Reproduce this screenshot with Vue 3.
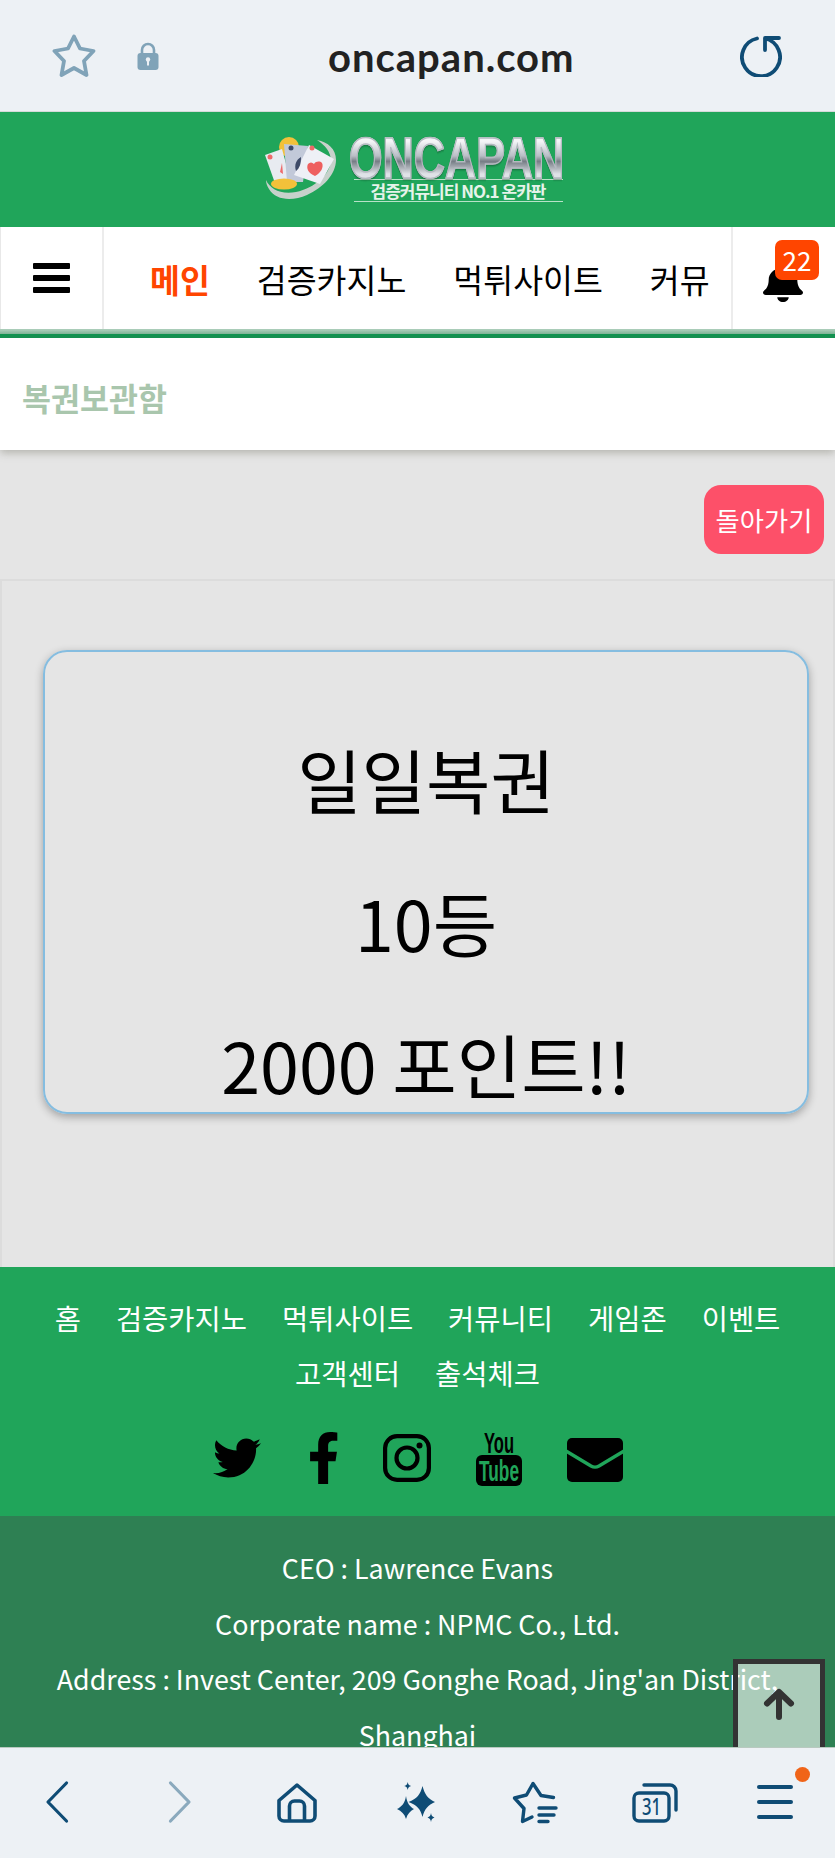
<template>
  <div class="app">
    <div class="topbar">
      <svg class="ic-star" viewBox="0 0 44 44" fill="none"><path d="M22 2.500L28 14.500 41.500 17 32 27 34.500 41 22 34 9.500 41 12 27 2.500 17 16 14.500z" stroke="#80a3b8" stroke-width="3.800" stroke-linejoin="round"/></svg>
      <svg class="ic-lock" viewBox="0 0 22 28" fill="none"><path d="M5 12V8a6 6 0 0 1 12 0v4" stroke="#80a3b8" stroke-width="2.600"/><rect x="0.500" y="11" width="21" height="17" rx="3" fill="#80a3b8"/><circle cx="11" cy="17.500" r="2.200" fill="#edf1f5"/><rect x="10" y="18" width="2" height="5.500" fill="#edf1f5"/></svg>
      <span class="url">oncapan.com</span>
      <svg class="ic-reload" viewBox="0 0 42 42" fill="none"><path d="M17 3.500A19 19 0 1 0 25 3.500M25 15V3h14" stroke="#0f4c75" stroke-width="3.800" stroke-linecap="round" stroke-linejoin="round"/></svg>
    </div>

    <div class="viewport">
      <header class="logo-bar">
        <div class="logo">
          <svg class="emblem" viewBox="0 0 72 64">
            <circle cx="24" cy="10" r="10" fill="#f3c13a"/>
            <path d="M52 3c11 2 19 9 19 20 0 14-13 28-29 35-14 6-31 6-38-6-2-3-3-6-3-9 4 9 15 15 30 12 19-4 34-18 35-31 0-9-6-16-14-21z" fill="#c7d1cb"/>
            <path d="M0 18l17-6 9 33-15 4z" fill="#e8ebf1"/>
            <path d="M19 7l24 2-5 36-16 0z" fill="#c2c9d9"/>
            <path d="M44 8l25 14-14 25-26-9z" fill="#eef0f6"/>
            <path d="M31 34c-2-6 0-11 5-14 0 6-1 11-5 14z" fill="#3d4a68"/>
            <circle cx="26" cy="11" r="2.500" fill="#3d4a68"/>
            <circle cx="5" cy="20" r="2.500" fill="#ee6a6a"/>
            <circle cx="47" cy="11" r="2.500" fill="#ee6a6a"/>
            <path d="M50 39c-7-3-9-8-7-12 2-2 4-2 6 0 2-3 6-3 8-1 2 4-1 10-7 13z" fill="#ee5f5f"/>
            <path d="M17 26l-2 9 3 2z" fill="#ee6a6a"/>
            <ellipse cx="19" cy="47" rx="13" ry="5.500" fill="#f3c13a"/>
          </svg>
          <div class="wordmark">
            <div class="brand"><span>ONCAPAN</span></div>
            <div class="tagline">검증커뮤니티 NO.1 온카판</div>
          </div>
        </div>
      </header>

      <nav class="nav">
        <div class="nav-menu">
          <span class="bar"></span><span class="bar"></span><span class="bar"></span>
        </div>
        <div class="nav-links">
          <a v-for="(item, i) in navItems" :key="item" :class="{ active: i === 0 }">{{ item }}</a>
        </div>
        <div class="nav-bell">
          <svg viewBox="0 0 448 512" preserveAspectRatio="none"><path d="M224 512c35.320 0 63.970-28.650 63.970-64H160.030c0 35.350 28.650 64 63.970 64zm215.390-149.710c-19.320-20.760-55.470-51.990-55.470-154.290 0-77.700-54.480-139.900-127.940-155.160V32c0-17.670-14.320-32-31.980-32s-31.980 14.330-31.980 32v20.840C118.560 68.100 64.080 130.300 64.080 208c0 102.300-36.150 133.530-55.470 154.290-6 6.450-8.660 14.160-8.610 21.710.11 16.400 12.980 32 32.100 32h383.800c19.120 0 32-15.600 32.100-32 .05-7.550-2.610-15.270-8.610-21.710z"/></svg>
          <span class="badge">22</span>
        </div>
      </nav>
      <div class="nav-line"></div>

      <div class="subtitle">복권보관함</div>

      <div class="back-row">
        <button class="back">돌아가기</button>
      </div>

      <section class="result">
        <div class="card">
          <p>일일복권</p>
          <p>10등</p>
          <p>2000 포인트!!</p>
        </div>
      </section>

      <footer class="foot">
        <div class="foot-links">
          <a v-for="item in footItems" :key="item">{{ item }}</a>
        </div>
        <div class="socials">
          <svg class="s-tw" viewBox="0 0 512 512"><path d="M459.370 151.716c.325 4.548.325 9.097.325 13.645 0 138.720-105.583 298.558-298.558 298.558-59.452 0-114.680-17.219-161.137-47.106 8.447.974 16.568 1.299 25.340 1.299 49.055 0 94.213-16.568 130.274-44.832-46.132-.975-84.792-31.188-98.112-72.772 6.498.974 12.995 1.624 19.818 1.624 9.421 0 18.843-1.300 27.614-3.573-48.081-9.747-84.143-51.980-84.143-102.985v-1.299c13.969 7.797 30.214 12.670 47.431 13.319-28.264-18.843-46.781-51.005-46.781-87.391 0-19.492 5.197-37.360 14.294-52.954 51.655 63.675 129.300 105.258 216.365 109.807-1.624-7.797-2.599-15.918-2.599-24.040 0-57.828 46.782-104.934 104.934-104.934 30.213 0 57.502 12.670 76.670 33.137 23.715-4.548 46.456-13.320 66.599-25.340-7.798 24.366-24.366 44.833-46.132 57.827 21.117-2.273 41.584-8.122 60.426-16.243-14.292 20.791-32.161 39.308-52.628 54.253z"/></svg>
          <svg class="s-fb" viewBox="22 0 272 512" preserveAspectRatio="none"><path d="M279.140 288l14.220-92.660h-88.910v-60.130c0-25.350 12.420-50.060 52.240-50.060h40.420V6.260S260.430 0 225.360 0c-73.220 0-121.080 44.380-121.080 124.720v70.620H22.890V288h81.390v224h100.170V288z"/></svg>
          <svg class="s-ig" viewBox="0 0 48 48" fill="none" stroke="#000" stroke-width="4.200"><rect x="2.100" y="2.100" width="43.800" height="43.800" rx="12"/><circle cx="24" cy="24" r="10.500"/><circle cx="36.500" cy="11.500" r="3" fill="#000" stroke="none"/></svg>
          <svg class="s-yt" viewBox="0 0 46 55">
            <text x="8" y="22" textLength="30" lengthAdjust="spacingAndGlyphs" class="yt-you">You</text>
            <rect x="0" y="24" width="46" height="31" rx="6" fill="#000"/>
            <text x="3" y="50" textLength="40" lengthAdjust="spacingAndGlyphs" class="yt-tube">Tube</text>
          </svg>
          <svg class="s-mail" viewBox="0 0 56 44"><rect width="56" height="44" rx="5" fill="#000"/><path d="M-1 13l25 15c2.500 1.400 5.500 1.400 8 0l25-15" fill="none" stroke="#20a55a" stroke-width="3.400"/></svg>
        </div>
      </footer>

      <div class="company">
        <p>CEO : Lawrence Evans</p>
        <p>Corporate name : NPMC Co., Ltd.</p>
        <p>Address : Invest Center, 209 Gonghe Road, Jing'an District, Shanghai</p>
      </div>

      <button class="to-top">
        <svg viewBox="0 0 32 32" fill="none"><path d="M16 29V5M4 15.500L16 4l12 11.500" stroke="#333" stroke-width="6" stroke-linecap="round" stroke-linejoin="round"/></svg>
      </button>
    </div>

    <div class="bottombar">
      <svg class="b-back" viewBox="0 0 24 42" fill="none"><path d="M21.500 2L3 21l18.500 19" stroke="#0f4c75" stroke-width="3.200" stroke-linecap="round" stroke-linejoin="round"/></svg>
      <svg class="b-fwd" viewBox="0 0 24 42" fill="none"><path d="M2.500 2L21 21 2.500 40" stroke="#8aa9bd" stroke-width="3.200" stroke-linecap="round" stroke-linejoin="round"/></svg>
      <svg class="b-home" viewBox="0 0 40 40" fill="none" stroke="#0f4c75" stroke-width="3.600" stroke-linejoin="round"><path d="M20 2L38 17.500V33a5 5 0 0 1-5 5H7a5 5 0 0 1-5-5V17.500z"/><path d="M12.500 38V23a5 5 0 0 1 5-5h5a5 5 0 0 1 5 5v15"/></svg>
      <svg class="b-spark" viewBox="0 0 40 42" fill="#0f4c75"><path d="M25.500 4C27.500 12 31 17 38 20 31 23 27.500 27 25.500 35 23.500 27 20 23 11.500 20 20 17 23.500 12 25.500 4z"/><path d="M9 14C10 21 13 25 17 27 13 29 10.500 32 9 37 7.500 32 4.500 29 0 27 4.500 25 8 21 9 14z"/><path d="M10.700 0c.4 2.400 1.300 3.300 3.500 4-2.200.7-3.100 1.600-3.500 4-.4-2.400-1.300-3.300-3.500-4 2.200-.7 3.100-1.600 3.500-4zM34 31c.4 2.600 1.300 3.600 3.500 4.500-2.200.9-3.100 1.900-3.500 4.500-.4-2.600-1.300-3.600-3.500-4.500 2.200-.9 3.100-1.900 3.500-4.500z"/></svg>
      <svg class="b-star" viewBox="0 0 46 44" fill="none" stroke="#0f4c75" stroke-width="3.400" stroke-linecap="round" stroke-linejoin="round"><path d="M41.500 16.500L29 14.500 21 2.500 14.500 14 2.500 17 12 27.500 10.500 40.500 20 36"/><path d="M27 27h17M27 34h15M27 40.500h9"/></svg>
      <svg class="b-tabs" viewBox="0 0 46 40" fill="none" stroke="#0f4c75" stroke-width="3.400" stroke-linecap="round"><path d="M12 2h26a6 6 0 0 1 6 6v19"/><rect x="2" y="10" width="35" height="28" rx="5"/><text x="10" y="32" textLength="19" lengthAdjust="spacingAndGlyphs" class="tab-count">31</text></svg>
      <div class="b-menu">
        <span></span><span></span><span></span>
        <i class="dot"></i>
      </div>
    </div>
  </div>
</template>

<script setup>
const navItems = ['메인', '검증카지노', '먹튀사이트', '커뮤']
const footItems = ['홈', '검증카지노', '먹튀사이트', '커뮤니티', '게임존', '이벤트', '고객센터', '출석체크']
</script>

<style>
body {
  background: #e5e5e5;
}
</style>

<style scoped>
.app {
  height: 1858px;
  display: flex;
  flex-direction: column;
  overflow: hidden;
  position: relative;
  background: #e5e5e5;
  font-family: "Noto Sans CJK KR", "Noto Sans", sans-serif;
  color: #000;
}

/* browser chrome */
.topbar {
  height: 111px;
  flex: none;
  box-sizing: content-box;
  border-bottom: 1px solid #d5dad9;
  background: #edf1f5;
  position: relative;
}
.ic-star { position: absolute; left: 52px; top: 34px; width: 44px; height: 44px; }
.ic-lock { position: absolute; left: 137px; top: 42px; width: 22px; height: 28px; }
.url {
  position: absolute;
  left: 328px;
  top: 32px;
  font: 700 40px/50px "Lato", sans-serif;
  color: #222;
  letter-spacing: 1px;
}
.ic-reload { position: absolute; left: 740px; top: 35px; width: 42px; height: 42px; }

.viewport {
  flex: 1;
  min-height: 0;
  overflow: hidden;
  position: relative;
}

.logo-bar {
  height: 115px;
  background: #20a55a;
  display: flex;
  justify-content: center;
  align-items: flex-start;
  padding-top: 25px;
  box-sizing: border-box;
}
.logo {
  display: flex;
  gap: 12px;
  margin-left: -4px;
}
.emblem { width: 72px; height: 64px; flex: none; }
.wordmark { width: 218px; }
.brand {
  height: 41px;
  font: 700 58px/42px "Liberation Sans", sans-serif;
  white-space: nowrap;
}
.brand span {
  display: inline-block;
  transform: scaleX(0.745);
  transform-origin: left center;
  background: linear-gradient(#f4f5f7 10%, #b9bec6 45%, #767d85 58%, #dfe2e7 88%);
  -webkit-background-clip: text;
  background-clip: text;
  color: transparent;
  -webkit-text-stroke: 1.500px #b4b9c0;
  filter: drop-shadow(0 1px 1px rgba(0, 0, 0, 0.35));
}
.tagline {
  margin: 1px 4px 0 5px;
  border-top: 1px solid #b7e2c8;
  border-bottom: 1px solid #b7e2c8;
  font-size: 17px;
  font-weight: 700;
  line-height: 21px;
  color: #e6f3ea;
  text-align: center;
  letter-spacing: -1px;
  white-space: nowrap;
}

.nav {
  height: 102px;
  background: #fff;
  display: flex;
  box-sizing: border-box;
  border-left: 1px solid #e8e8e8;
}
.nav-menu {
  width: 103px;
  flex: none;
  border-right: 2px solid #ececec;
  display: flex;
  flex-direction: column;
  justify-content: center;
  gap: 6px;
  padding-left: 32px;
  box-sizing: border-box;
}
.bar {
  width: 37px;
  height: 6px;
  border-radius: 1px;
  background: #000;
}
.nav-links {
  flex: 1;
  display: flex;
  align-items: center;
  gap: 47px;
  padding-left: 46px;
  overflow: hidden;
  white-space: nowrap;
  font-size: 32.500px;
}
.nav-links .active {
  color: #ff4500;
  font-weight: 700;
}
.nav-bell {
  width: 104px;
  flex: none;
  border-left: 2px solid #ececec;
  position: relative;
  box-sizing: border-box;
}
.nav-bell svg {
  position: absolute;
  left: 30px;
  top: 37px;
  width: 40px;
  height: 38px;
}
.badge {
  position: absolute;
  left: 42px;
  top: 13px;
  width: 44px;
  height: 40px;
  border-radius: 7px;
  background: #ff4500;
  color: #fff;
  font-size: 26px;
  line-height: 40px;
  text-align: center;
}
.nav-line {
  height: 9px;
  background: linear-gradient(#a9ccb8 0, #a9ccb8 1px, #7fb596 5px, #0f934f 5px);
}

.subtitle {
  height: 112px;
  background: #fff;
  box-shadow: 0 3px 8px rgba(110, 110, 95, 0.4);
  position: relative;
  padding-left: 22px;
  font-size: 31.500px;
  font-weight: 700;
  line-height: 118px;
  color: #a9c6ad;
}

.back-row {
  height: 129px;
  display: flex;
  justify-content: flex-end;
  padding: 35px 11px 0 0;
  box-sizing: border-box;
}
.back {
  width: 120px;
  height: 69px;
  border: 0;
  padding: 0;
  border-radius: 17px;
  background: #fd5069;
  color: #fff;
  font-family: inherit;
  font-size: 26.300px;
}

.result {
  height: 688px;
  box-sizing: border-box;
  border-top: 2px solid #dcdcdc;
  border-left: 2px solid #dcdcdc;
  border-right: 2px solid #dcdcdc;
  padding: 69px 24px 0 41px;
}
.card {
  height: 464px;
  box-sizing: border-box;
  border: 2.500px solid #85bde0;
  border-radius: 24px;
  box-shadow: 0 3px 8px rgba(0, 0, 0, 0.3);
  padding-top: 56px;
  text-align: center;
  font-size: 70px;
  line-height: 142.500px;
}
.card p {
  margin: 0;
  white-space: nowrap;
}

.foot {
  height: 249px;
  background: #20a55a;
  box-sizing: border-box;
  padding-top: 23px;
}
.foot-links {
  display: flex;
  flex-wrap: wrap;
  justify-content: center;
  column-gap: 35px;
  padding: 0 30px;
  font-size: 28.500px;
  line-height: 55px;
  color: #fff;
}
.socials {
  display: flex;
  justify-content: center;
  align-items: center;
  height: 56px;
  margin-top: 30px;
}
.socials svg { overflow: visible; }
.s-tw { width: 48px; height: 48px; margin-right: 49px; }
.s-fb { width: 27px; height: 52px; margin-right: 46px; }
.s-ig { width: 48px; height: 48px; margin-right: 45px; }
.s-yt { width: 46px; height: 55px; margin-right: 45px; }
.s-mail { width: 56px; height: 44px; margin-top: 3px; }
.yt-you {
  font: 700 29px "Liberation Sans", sans-serif;
  fill: #000;
}
.yt-tube {
  font: 700 29px "Liberation Sans", sans-serif;
  fill: #20a55a;
}

.company {
  background: #2e8053;
  padding: 24px 40px 60px;
  font-size: 26.800px;
  line-height: 55.500px;
  color: #fff;
  text-align: center;
}
.company p {
  margin: 0;
}

.to-top {
  position: absolute;
  left: 733px;
  top: 1547px;
  width: 92px;
  height: 120px;
  border: 5px solid #333;
  border-bottom: 0;
  padding: 0;
  background: rgba(255, 255, 255, 0.6);
  box-sizing: border-box;
}
.to-top svg {
  position: absolute;
  left: 25px;
  top: 24px;
  width: 32px;
  height: 32px;
}

/* bottom browser bar */
.bottombar {
  height: 111px;
  flex: none;
  border-top: 1px solid #b9c9c0;
  box-sizing: border-box;
  background: #edf1f5;
  position: relative;
}
.bottombar svg { position: absolute; overflow: visible; }
.b-back { left: 45px; top: 33px; width: 24px; height: 42px; }
.b-fwd { left: 168px; top: 33px; width: 24px; height: 42px; }
.b-home { left: 277px; top: 35px; width: 40px; height: 40px; }
.b-spark { left: 397px; top: 34px; width: 40px; height: 42px; }
.b-star { left: 512px; top: 33px; width: 46px; height: 44px; }
.b-tabs { left: 632px; top: 35px; width: 46px; height: 40px; }
.tab-count {
  font: 500 24px "Noto Sans", sans-serif;
  fill: #0f4c75;
  stroke: none;
}
.b-menu {
  position: absolute;
  left: 757px;
  top: 37px;
  width: 36px;
  display: flex;
  flex-direction: column;
  gap: 11px;
}
.b-menu span {
  height: 4px;
  border-radius: 2px;
  background: #0f4c75;
}
.dot {
  position: absolute;
  left: 38px;
  top: -18px;
  width: 15px;
  height: 15px;
  border-radius: 50%;
  background: #f06418;
}
</style>
